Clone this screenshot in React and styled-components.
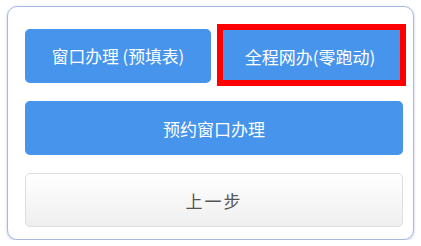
import React from "react";
import styled, { createGlobalStyle } from "styled-components";

const Global = createGlobalStyle`
  html, body { margin: 0; padding: 0; background: #ffffff; }
  body { font-family: "Noto Sans CJK SC", "Noto Sans", sans-serif; }
`;

const Card = styled.div`
  box-sizing: border-box;
  margin: 6px 0 0 7px;
  width: 407px;
  height: 234px;
  border: 1.5px solid #a9b8e3;
  border-radius: 10px;
  background: #ffffff;
  box-shadow: 0 1px 3px rgba(120, 140, 200, 0.4);
  padding: 22px 10px 0 17px;
  display: flex;
  flex-direction: column;
  gap: 18px;
`;

const Row = styled.div`
  display: grid;
  grid-template-columns: 186px 186px;
  gap: 6px;
`;

const Button = styled.div`
  position: relative;
  box-sizing: border-box;
  height: 54px;
  display: flex;
  align-items: center;
  justify-content: center;
  border-radius: 5px;
  font-size: ${(p) => p.$size || 17}px;
  letter-spacing: ${(p) => p.$spacing || 0}px;
  background: ${(p) => (p.$variant === "light" ? "linear-gradient(#ffffff, #efefef)" : "#4694ec")};
  color: ${(p) => (p.$variant === "light" ? "#555555" : "#ffffff")};
  border: ${(p) => (p.$variant === "light" ? "1px solid #dedede" : "none")};
`;

const Highlight = styled.div`
  position: absolute;
  top: -5px;
  bottom: -3px;
  left: 0;
  right: -3px;
  border: 6px solid #ff0000;
  pointer-events: none;
`;

export default function App() {
  return (
    <>
      <Global />
      <Card>
        <Row>
          <Button $size={16.8}>窗口办理 (预填表)</Button>
          <Button $size={17}>
            全程网办(零跑动)
            <Highlight />
          </Button>
        </Row>
        <Button>预约窗口办理</Button>
        <Button $variant="light" $spacing={2}>上一步</Button>
      </Card>
    </>
  );
}
